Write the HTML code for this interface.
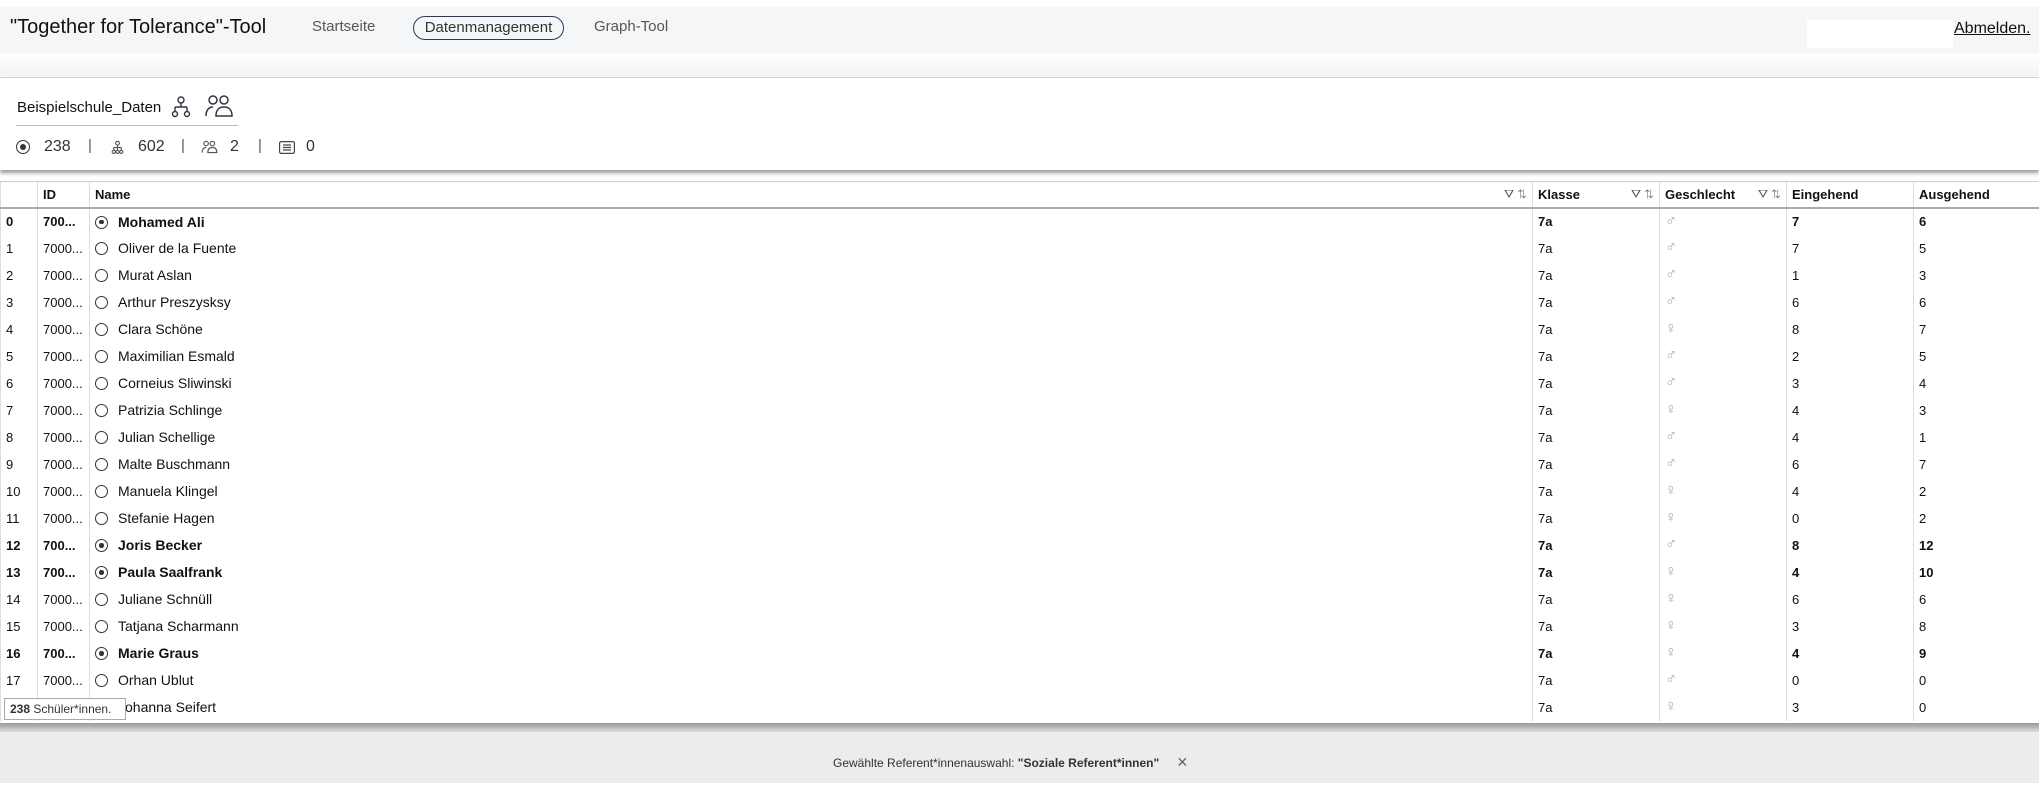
<!DOCTYPE html>
<html><head><meta charset="utf-8"><style>
*{box-sizing:border-box;margin:0;padding:0}
body{width:2039px;height:794px;background:#fff;font-family:"Liberation Sans",sans-serif;color:#111;position:relative;overflow:hidden}
.hdr{position:absolute;left:0;top:7px;width:2039px;height:47px;background:#f5f6f8}
.abs{position:absolute;white-space:nowrap}
.gap{position:absolute;left:0;top:54px;width:2039px;height:22px;background:linear-gradient(#fff,#f3f3f3)}
.card{position:absolute;left:0;top:77px;width:2039px;height:93px;background:#fff;border-top:1px solid #ccc;box-shadow:0 3px 4px #999}
table{position:absolute;left:0;top:181px;width:2039px;border-collapse:collapse;font-size:13px;table-layout:fixed}
td,th{height:27px;padding:0 5px;border-left:1px solid #ddd;text-align:left;white-space:nowrap;overflow:hidden}
th{height:26px;font-size:13px;font-weight:bold;border-bottom:2px solid #aaa;border-top:1px solid #ccc}
td.n{font-size:14px}
tr.b td{font-weight:bold}
td.g{color:#aaa;font-size:16px;font-weight:normal!important}
.r{display:inline-block;width:13px;height:13px;border:1.3px solid #333;border-radius:50%;vertical-align:-2px;margin-right:10px;position:relative}
.b .r::after{content:"";position:absolute;left:3px;top:3px;width:4.5px;height:4.5px;background:#333;border-radius:50%}
.fi{float:right;font-size:12px;color:#555;font-weight:normal}
</style></head><body>
<div class="hdr"></div>
<div class="abs" style="left:10px;top:16px;font-size:20px">"Together for Tolerance"-Tool</div>
<div class="abs" style="left:312px;top:18px;font-size:15px;color:#555">Startseite</div>
<div class="abs" style="left:413px;top:16px;width:151px;height:24px;border:1.5px solid #2a3a5a;border-radius:12px;font-size:15px;color:#333;text-align:center;line-height:21px">Datenmanagement</div>
<div class="abs" style="left:594px;top:18px;font-size:15px;color:#555">Graph-Tool</div>
<div class="abs" style="left:1807px;top:20px;width:146px;height:28px;background:#fff"></div>
<div class="abs" style="left:1954px;top:20px;font-size:16px;text-decoration:underline">Abmelden.</div>
<div class="gap"></div>
<div class="card">
<div class="abs" style="left:17px;top:21px;font-size:15px">Beispielschule_Daten</div>
<svg class="abs" style="left:170px;top:17px" width="22" height="24" viewBox="0 0 22 24" fill="none" stroke="#334" stroke-width="1.4"><circle cx="11" cy="5" r="3"/><path d="M11 8v4M5 12h12M5 12v4M17 12v4"/><circle cx="5" cy="19" r="2.5"/><circle cx="17" cy="19" r="2.5"/></svg>
<svg class="abs" style="left:204px;top:16px" width="30" height="26" viewBox="0 0 30 26" fill="none" stroke="#334" stroke-width="1.5"><circle cx="9" cy="6" r="4"/><circle cx="20" cy="6" r="4"/><path d="M2 22c0-6 3-9 7-9M12 22c0-6 3-9 8-9s8 3 8 9z"/></svg>
<div class="abs" style="left:16px;top:47px;width:222px;border-top:1px solid #bbb"></div>
<div class="abs" style="left:16px;top:62px;width:14px;height:14px;border:1.3px solid #333;border-radius:50%"></div>
<div class="abs" style="left:20px;top:66px;width:6px;height:6px;background:#333;border-radius:50%"></div>
<div class="abs" style="left:44px;top:60px;font-size:16px;color:#333">238</div>
<div class="abs" style="left:88px;top:59px;font-size:15px;color:#555">|</div>
<svg class="abs" style="left:110px;top:62px" width="15" height="15" viewBox="0 0 22 24" fill="none" stroke="#555" stroke-width="1.8"><circle cx="11" cy="5" r="3"/><path d="M11 8v4M5 12h12M5 12v4M17 12v4M11 12v4"/><circle cx="5" cy="19" r="2.5"/><circle cx="11" cy="19" r="2.5"/><circle cx="17" cy="19" r="2.5"/></svg>
<div class="abs" style="left:138px;top:60px;font-size:16px;color:#333">602</div>
<div class="abs" style="left:181px;top:59px;font-size:15px;color:#555">|</div>
<svg class="abs" style="left:201px;top:62px" width="17" height="15" viewBox="0 0 30 26" fill="none" stroke="#555" stroke-width="2"><circle cx="9" cy="6" r="4"/><circle cx="20" cy="6" r="4"/><path d="M2 22c0-6 3-9 7-9M12 22c0-6 3-9 8-9s8 3 8 9z"/></svg>
<div class="abs" style="left:230px;top:60px;font-size:16px;color:#333">2</div>
<div class="abs" style="left:258px;top:59px;font-size:15px;color:#555">|</div>
<svg class="abs" style="left:279px;top:63px" width="16" height="13" viewBox="0 0 16 13" fill="none" stroke="#444" stroke-width="1.2"><rect x="0.6" y="0.6" width="14.8" height="11.8" rx="1.5"/><path d="M4 4h8M4 6.5h8M4 9h8"/></svg>
<div class="abs" style="left:306px;top:60px;font-size:16px;color:#333">0</div>
</div>
<table>
<colgroup><col style="width:37px"><col style="width:52px"><col style="width:1443px"><col style="width:127px"><col style="width:127px"><col style="width:127px"><col style="width:126px"></colgroup>
<tr><th></th><th>ID</th><th>Name<span class="fi">⛛ ⇅</span></th><th>Klasse<span class="fi">⛛ ⇅</span></th><th>Geschlecht<span class="fi">⛛ ⇅</span></th><th>Eingehend</th><th>Ausgehend</th></tr>
<tr class="b"><td>0</td><td>700...</td><td class="n"><span class="r"></span>Mohamed Ali</td><td>7a</td><td class="g">♂</td><td>7</td><td>6</td></tr>
<tr><td>1</td><td>7000...</td><td class="n"><span class="r"></span>Oliver de la Fuente</td><td>7a</td><td class="g">♂</td><td>7</td><td>5</td></tr>
<tr><td>2</td><td>7000...</td><td class="n"><span class="r"></span>Murat Aslan</td><td>7a</td><td class="g">♂</td><td>1</td><td>3</td></tr>
<tr><td>3</td><td>7000...</td><td class="n"><span class="r"></span>Arthur Preszysksy</td><td>7a</td><td class="g">♂</td><td>6</td><td>6</td></tr>
<tr><td>4</td><td>7000...</td><td class="n"><span class="r"></span>Clara Schöne</td><td>7a</td><td class="g">♀</td><td>8</td><td>7</td></tr>
<tr><td>5</td><td>7000...</td><td class="n"><span class="r"></span>Maximilian Esmald</td><td>7a</td><td class="g">♂</td><td>2</td><td>5</td></tr>
<tr><td>6</td><td>7000...</td><td class="n"><span class="r"></span>Corneius Sliwinski</td><td>7a</td><td class="g">♂</td><td>3</td><td>4</td></tr>
<tr><td>7</td><td>7000...</td><td class="n"><span class="r"></span>Patrizia Schlinge</td><td>7a</td><td class="g">♀</td><td>4</td><td>3</td></tr>
<tr><td>8</td><td>7000...</td><td class="n"><span class="r"></span>Julian Schellige</td><td>7a</td><td class="g">♂</td><td>4</td><td>1</td></tr>
<tr><td>9</td><td>7000...</td><td class="n"><span class="r"></span>Malte Buschmann</td><td>7a</td><td class="g">♂</td><td>6</td><td>7</td></tr>
<tr><td>10</td><td>7000...</td><td class="n"><span class="r"></span>Manuela Klingel</td><td>7a</td><td class="g">♀</td><td>4</td><td>2</td></tr>
<tr><td>11</td><td>7000...</td><td class="n"><span class="r"></span>Stefanie Hagen</td><td>7a</td><td class="g">♀</td><td>0</td><td>2</td></tr>
<tr class="b"><td>12</td><td>700...</td><td class="n"><span class="r"></span>Joris Becker</td><td>7a</td><td class="g">♂</td><td>8</td><td>12</td></tr>
<tr class="b"><td>13</td><td>700...</td><td class="n"><span class="r"></span>Paula Saalfrank</td><td>7a</td><td class="g">♀</td><td>4</td><td>10</td></tr>
<tr><td>14</td><td>7000...</td><td class="n"><span class="r"></span>Juliane Schnüll</td><td>7a</td><td class="g">♀</td><td>6</td><td>6</td></tr>
<tr><td>15</td><td>7000...</td><td class="n"><span class="r"></span>Tatjana Scharmann</td><td>7a</td><td class="g">♀</td><td>3</td><td>8</td></tr>
<tr class="b"><td>16</td><td>700...</td><td class="n"><span class="r"></span>Marie Graus</td><td>7a</td><td class="g">♀</td><td>4</td><td>9</td></tr>
<tr><td>17</td><td>7000...</td><td class="n"><span class="r"></span>Orhan Ublut</td><td>7a</td><td class="g">♂</td><td>0</td><td>0</td></tr>
<tr><td>18</td><td>7000...</td><td class="n"><span class="r"></span>Johanna Seifert</td><td>7a</td><td class="g">♀</td><td>3</td><td>0</td></tr>
</table>
<div class="abs" style="left:4px;top:698px;width:122px;height:22px;background:#fff;border:1px solid #aaa;font-size:12px;line-height:20px;padding-left:5px;color:#333"><b>238</b> Schüler*innen.</div>
<div class="abs" style="left:0;top:723px;width:2039px;height:9px;background:linear-gradient(#999,#ddd)"></div>
<div class="abs" style="left:0;top:732px;width:2039px;height:51px;background:#ececec"></div>
<div class="abs" style="left:833px;top:754px;font-size:12px;color:#333">Gewählte Referent*innenauswahl: <b>"Soziale Referent*innen"</b> <span style="margin-left:14px;font-size:14px;color:#666">✕</span></div>
</body></html>
